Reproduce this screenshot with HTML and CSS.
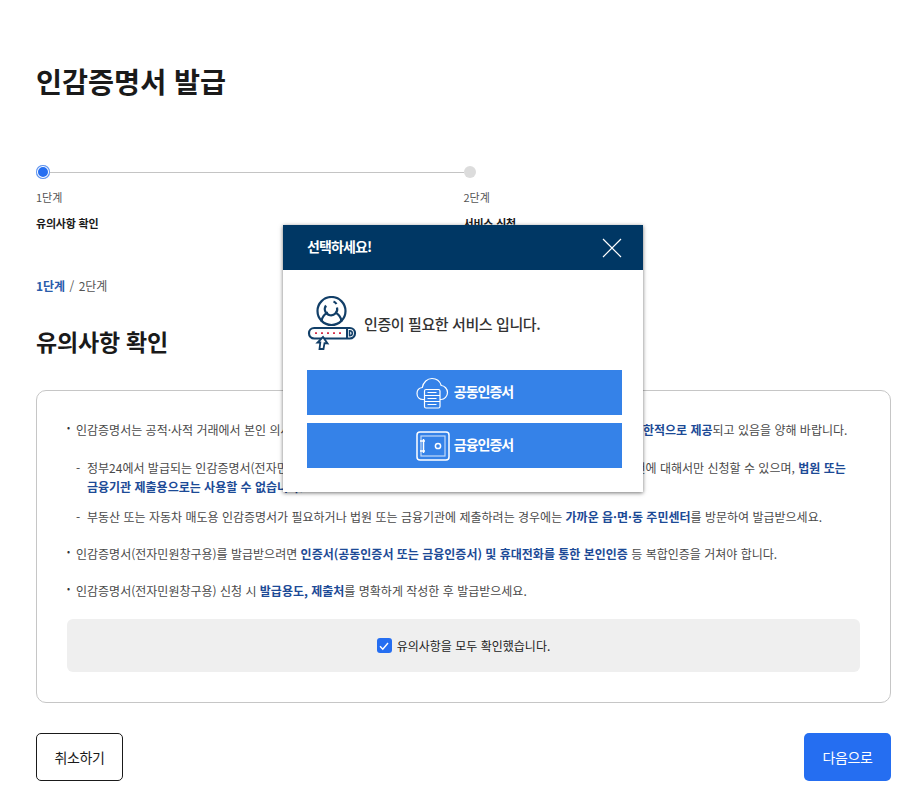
FILE: index.html
```html
<!DOCTYPE html>
<html lang="ko">
<head>
<meta charset="utf-8">
<title>인감증명서 발급</title>
<link rel="stylesheet" href="styles.css">
</head>
<body>
<main class="page">
  <h1 class="title">인감증명서 발급</h1>
  <ol class="steps">
    <li class="step step-active">
      <div class="track"><span class="dot"></span><span class="line"></span></div>
      <div class="step-num">1단계</div>
      <div class="step-name">유의사항 확인</div>
    </li>
    <li class="step">
      <div class="track"><span class="dot"></span></div>
      <div class="step-num">2단계</div>
      <div class="step-name">서비스 신청</div>
    </li>
  </ol>
  <p class="crumb"><strong>1단계</strong> <span class="sep">/</span> 2단계</p>
  <h2 class="subtitle">유의사항 확인</h2>
  <section class="card">
    <ul class="notes">
      <li class="note">인감증명서는 공적·사적 거래에서 본인 의사를 확인하는 중요한 수단으로 활용되고있으므로 전자민원창구에서는 <b>제한적으로 제공</b>되고 있음을 양해 바랍니다.
        <ul class="subnotes">
          <li class="subnote">정부24에서 발급되는 인감증명서(전자민원창구용)는 재산권 행사 관련 용도가 아닌 일반적인 용도의 발급 신청 건에 대해서만 신청할 수 있으며, <b>법원 또는 금융기관 제출용으로는 사용할 수 없습니다.</b></li>
          <li class="subnote">부동산 또는 자동차 매도용 인감증명서가 필요하거나 법원 또는 금융기관에 제출하려는 경우에는 <b>가까운 읍·면·동 주민센터</b>를 방문하여 발급받으세요.</li>
        </ul>
      </li>
      <li class="note">인감증명서(전자민원창구용)를 발급받으려면 <b>인증서(공동인증서 또는 금융인증서) 및 휴대전화를 통한 본인인증</b> 등 복합인증을 거쳐야 합니다.</li>
      <li class="note">인감증명서(전자민원창구용) 신청 시 <b>발급용도, 제출처</b>를 명확하게 작성한 후 발급받으세요.</li>
    </ul>
    <div class="agree">
      <span class="check"><svg viewBox="0 0 14 14" width="14" height="14"><path d="M3 7.2l2.8 3L11 4" fill="none" stroke="#fff" stroke-width="1.4"/></svg></span>
      <span>유의사항을 모두 확인했습니다.</span>
    </div>
  </section>
  <div class="actions">
    <button class="btn btn-cancel">취소하기</button>
    <button class="btn btn-next">다음으로</button>
  </div>
</main>

<div class="modal">
  <header class="modal-head">
    <span class="modal-title">선택하세요!</span>
    <svg class="close" viewBox="0 0 20 20" width="20" height="20"><path d="M1 1l18 18M19 1L1 19" stroke="#fff" stroke-width="1.2" fill="none"/></svg>
  </header>
  <div class="modal-body">
    <div class="modal-msg">
      <svg class="auth-icon" viewBox="0 0 50 56" width="50" height="56">
        <g fill="none" stroke="#123f68" stroke-width="2.200">
          <circle cx="24.500" cy="15" r="14"/>
          <path d="M19 9.500a6.200 6.200 0 1 0 11 2"/>
          <path d="M26.500 5.500a6.200 6.200 0 0 1 3 2.500"/>
          <path d="M14.500 25.500c.5-5 3-7.500 6.500-9M34.500 25.500c-.5-5-3-7.500-6.500-9"/>
          <rect x="2" y="32" width="46" height="10.500" rx="5.200" fill="#fff"/>
          <path d="M40 32.500v9.500" stroke-width="2"/>
          <path d="M42.500 34.800v5c2 0 2.800-1 2.800-2.500s-.8-2.500-2.800-2.500z" stroke-width="1.500"/>
          <path d="M12.500 53l.8-6.500h-2.800l5.500-5.500 4.500 6.500-3-.3-1 5.800z" fill="#fff" stroke-width="1.800"/>
        </g>
        <path d="M8 37.200h2M14 37.200h2M20 37.200h2M26 37.200h2M32 37.200h2" stroke="#d6304a" stroke-width="1.800"/>
      </svg>
      <span class="msg-text">인증이 필요한 서비스 입니다.</span>
    </div>
    <button class="cert">
      <svg viewBox="0 0 34 32" width="34" height="32">
        <g fill="none" stroke="#fff" stroke-width="1.200">
          <path d="M8 22.500H7C3.300 22.500 1 19.800 1 16.500c0-3.200 2.300-5.600 5.300-6C7.300 5 11.300 1.500 16 1.500c4.500 0 8 3 9.200 7 3.400.3 6.300 3.300 6.300 7 0 3.800-3 7-6.500 7h-1"/>
          <rect x="8.500" y="12.500" width="15.500" height="18.500" rx="1.500"/>
          <path d="M8.500 18.500H24M8.500 24.500H24M11.500 15.500h9M11.500 21.500h9M11.500 27.500h9" stroke-width="1"/>
        </g>
      </svg>
      <span class="cert-label">공동인증서</span>
    </button>
    <button class="cert">
      <svg viewBox="0 0 34 30" width="34" height="30">
        <g fill="none" stroke="#fff">
          <rect x="1" y="1" width="32" height="28" rx="3" stroke-width="1.500"/>
          <rect x="5" y="5" width="24" height="20" stroke-width="1.200" opacity=".7"/>
          <circle cx="22" cy="15" r="2.600" stroke-width="1.500"/>
          <path d="M7.500 8v14M4 10h5M4 20h5" stroke-width="1.500"/>
        </g>
      </svg>
      <span class="cert-label">금융인증서</span>
    </button>
  </div>
</div>
</body>
</html>
```
FILE: styles.css
```css
* { box-sizing: border-box; }
html, body { margin: 0; padding: 0; background: #fff; }
body {
  font-family: "Noto Sans CJK KR", "Noto Sans", sans-serif;
  color: #1a1a1a;
  overflow: hidden;
  height: 811px;
}
.page { padding: 63px 24px 0 36px; }
.title { margin: 0; font-size: 28.300px; line-height: 36px; font-weight: 700; }
.steps { list-style: none; margin: 66px 0 0; padding: 0; display: flex; }
.step { width: 428px; }
.track { display: flex; align-items: center; height: 14px; }
.dot { width: 12px; height: 12px; border-radius: 50%; background: #dcdcdc; flex: none; }
.step-active .dot {
  width: 14px; height: 14px;
  background: #256ef1;
  box-shadow: inset 0 0 0 1px #5a90ee, inset 0 0 0 2px #fff;
}
.line { flex: 1; height: 1px; background: #c4c4c4; }
.step-num { margin-top: 9px; font-size: 11px; line-height: 18px; color: #555; }
.step-name { margin-top: 8px; font-size: 11px; line-height: 18px; font-weight: 700; letter-spacing: -0.2px; color: #1a1a1a; }
.crumb { margin: 45px 0 0; font-size: 12px; line-height: 18px; color: #555; }
.crumb strong { color: #2a5cab; font-weight: 700; }
.sep { margin: 0 1px; }
.subtitle { margin: 28px 0 0; font-size: 23px; line-height: 36px; font-weight: 700; letter-spacing: -0.2px; }
.card {
  margin-top: 31px;
  height: 313px;
  border: 1px solid #c6c6c6;
  border-radius: 10px;
  padding: 29px 30px 0;
}
.notes { list-style: none; margin: 0; padding: 0; font-size: 12px; line-height: 19px; color: #4a4a4a; }
.note { position: relative; padding-left: 9px; margin-bottom: 18px; }
.note:last-child { margin-bottom: 0; }
.note::before { content: "•"; position: absolute; left: 0; top: -2px; font-size: 9px; color: #333; }
.note b, .subnote b { color: #1c4a96; font-weight: 700; }
.subnotes { list-style: none; margin: 19px 0 0; padding: 0; }
.subnote { position: relative; padding-left: 11px; margin-top: 11px; }
.subnote::before { content: "-"; position: absolute; left: 0; top: 0; }
.agree {
  margin-top: 19px;
  height: 53px;
  background: #efefef;
  border-radius: 6px;
  display: flex; align-items: center; justify-content: center; gap: 5px;
  font-size: 12px; color: #222;
}
.check {
  width: 15px; height: 15px; border-radius: 3px; background: #256ef1;
  display: flex; align-items: center; justify-content: center;
}
.actions { display: flex; justify-content: space-between; margin-top: 30px; }
.btn { width: 87px; height: 48px; border-radius: 5px; font: inherit; font-size: 14px; letter-spacing: -0.4px; padding: 0; }
.btn-cancel { background: #fff; border: 1px solid #1a1a1a; color: #1a1a1a; }
.btn-next { background: #256ef1; border: 0; color: #fff; }

.modal {
  position: absolute; left: 283px; top: 225px;
  width: 360px; height: 267px;
  background: #fff;
  box-shadow: 0 1px 4px rgba(0,0,0,.55);
}
.modal-head {
  height: 45px; background: #003764; color: #fff;
  display: flex; align-items: center; justify-content: space-between;
  padding: 0 21px 4px 24px;
}
.close { margin-top: 4px; }
.modal-title { font-size: 14px; font-weight: 700; letter-spacing: -0.9px; }
.modal-body { padding: 25px 21px 0 24px; }
.modal-msg { display: flex; align-items: center; gap: 7px; height: 56px; margin-bottom: 19px; }
.auth-icon { margin-top: 2px; }
.msg-text { font-size: 15px; font-weight: 500; color: #333; letter-spacing: -0.4px; }
.cert {
  display: flex; align-items: center; justify-content: center; gap: 4px;
  width: 315px; height: 45px;
  margin-bottom: 8px;
  background: #3582e8; border: 0; padding: 0; color: #fff;
  font: inherit; font-size: 14px; font-weight: 700; letter-spacing: -1px;
}
.cert-label { margin-bottom: 3px; }
```
